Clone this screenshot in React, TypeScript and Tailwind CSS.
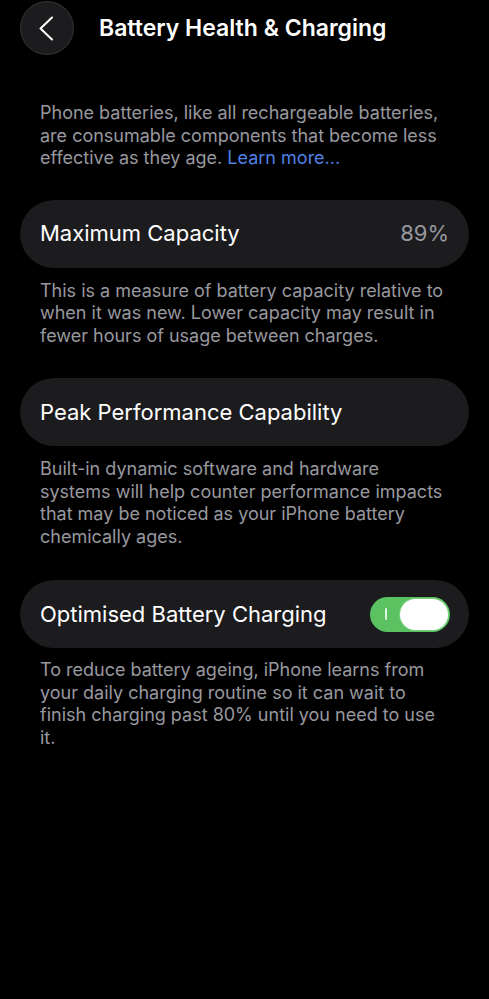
function Footnote({ children }: { children: React.ReactNode }) {
  return <p className="pl-10 pr-[40px] text-[18px] leading-[22.5px] text-[#98989f]">{children}</p>;
}

function Row({ label, right }: { label: string; right?: React.ReactNode }) {
  return (
    <div className="mx-5 flex h-[68px] items-center justify-between rounded-full bg-[#1c1c1e] pl-5 pr-5">
      <span className="text-[22px] text-white">{label}</span>
      {right}
    </div>
  );
}

function Toggle() {
  return (
    <div className="-mr-[1px] flex h-[35px] w-[80px] items-center rounded-full bg-[#5bc262] p-[2px]">
      <div className="flex w-[28px] justify-center">
        <div className="h-[12px] w-[1.5px] rounded bg-white/80" />
      </div>
      <div className="h-[31px] w-[48px] rounded-full bg-white shadow-[0_0_0_1px_rgba(140,220,140,0.6)]" />
    </div>
  );
}

export default function App() {
  return (
    <div
      className="min-h-screen bg-black pb-10 text-white"
      style={{ fontFamily: "Inter, 'Noto Sans', sans-serif" }}
    >
      <header className="flex items-center pl-5 pt-[1px]">
        <button className="flex h-[54px] w-[54px] items-center justify-center rounded-full border border-white/10 bg-[#1c1c1e]">
          <svg width="16" height="25" viewBox="0 0 16 25" className="-ml-[3px]">
            <path
              d="M14 1.5 L2.5 12.5 L14 23.5"
              fill="none"
              stroke="white"
              strokeWidth="2"
              strokeLinecap="round"
              strokeLinejoin="round"
            />
          </svg>
        </button>
        <h1 className="ml-[25px] text-[23px] font-semibold">Battery Health &amp; Charging</h1>
      </header>

      <div className="mt-[47px]">
        <Footnote>
          Phone batteries, like all rechargeable batteries, are consumable components that become
          less effective as they age. <span className="text-[#4f80e6]">Learn more...</span>
        </Footnote>
      </div>

      <div className="mt-[30px]">
        <Row label="Maximum Capacity" right={<span className="text-[22px] text-[#98989f]">89%</span>} />
      </div>
      <div className="mt-[12px]">
        <Footnote>
          This is a measure of battery capacity relative to when it was new. Lower capacity may
          result in fewer hours of usage between charges.
        </Footnote>
      </div>

      <div className="mt-[31px]">
        <Row label="Peak Performance Capability" />
      </div>
      <div className="mt-[12px]">
        <Footnote>
          Built-in dynamic software and hardware systems will help counter performance impacts
          that may be noticed as your iPhone battery chemically ages.
        </Footnote>
      </div>

      <div className="mt-[32px]">
        <Row label="Optimised Battery Charging" right={<Toggle />} />
      </div>
      <div className="mt-[11px]">
        <Footnote>
          To reduce battery ageing, iPhone learns from your daily charging routine so it can wait
          to finish charging past 80% until you need to use it.
        </Footnote>
      </div>
    </div>
  );
}
